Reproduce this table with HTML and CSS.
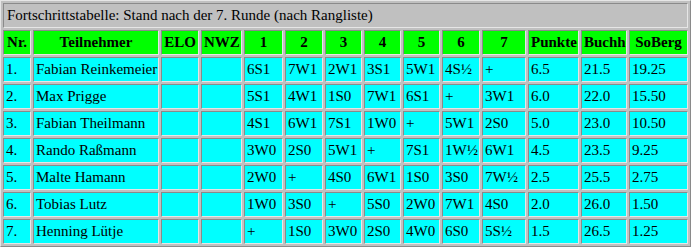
FILE: index.html
```
<!DOCTYPE html>
<html>
<head>
<meta charset="utf-8">
<link rel="stylesheet" href="styles.css">
</head>
<body>
<table class="tab">
<colgroup>
<col class="c-nr"><col class="c-name"><col class="c-elo"><col class="c-nwz">
<col class="c-r1"><col class="c-r2"><col class="c-r3"><col class="c-r4"><col class="c-r5"><col class="c-r6"><col class="c-r7">
<col class="c-pkt"><col class="c-buch"><col class="c-sob">
</colgroup>
<tr><td class="cap" colspan="14">Fortschrittstabelle: Stand nach der 7. Runde (nach Rangliste)</td></tr>
<tr class="head"><th>Nr.</th><th>Teilnehmer</th><th>ELO</th><th>NWZ</th><th>1</th><th>2</th><th>3</th><th>4</th><th>5</th><th>6</th><th>7</th><th>Punkte</th><th>Buchh</th><th>SoBerg</th></tr>
<tr><td>1.</td><td>Fabian Reinkemeier</td><td></td><td></td><td>6S1</td><td>7W1</td><td>2W1</td><td>3S1</td><td>5W1</td><td>4S½</td><td>+</td><td>6.5</td><td>21.5</td><td>19.25</td></tr>
<tr><td>2.</td><td>Max Prigge</td><td></td><td></td><td>5S1</td><td>4W1</td><td>1S0</td><td>7W1</td><td>6S1</td><td>+</td><td>3W1</td><td>6.0</td><td>22.0</td><td>15.50</td></tr>
<tr><td>3.</td><td>Fabian Theilmann</td><td></td><td></td><td>4S1</td><td>6W1</td><td>7S1</td><td>1W0</td><td>+</td><td>5W1</td><td>2S0</td><td>5.0</td><td>23.0</td><td>10.50</td></tr>
<tr><td>4.</td><td>Rando Raßmann</td><td></td><td></td><td>3W0</td><td>2S0</td><td>5W1</td><td>+</td><td>7S1</td><td>1W½</td><td>6W1</td><td>4.5</td><td>23.5</td><td>9.25</td></tr>
<tr><td>5.</td><td>Malte Hamann</td><td></td><td></td><td>2W0</td><td>+</td><td>4S0</td><td>6W1</td><td>1S0</td><td>3S0</td><td>7W½</td><td>2.5</td><td>25.5</td><td>2.75</td></tr>
<tr><td>6.</td><td>Tobias Lutz</td><td></td><td></td><td>1W0</td><td>3S0</td><td>+</td><td>5S0</td><td>2W0</td><td>7W1</td><td>4S0</td><td>2.0</td><td>26.0</td><td>1.50</td></tr>
<tr><td>7.</td><td>Henning Lütje</td><td></td><td></td><td>+</td><td>1S0</td><td>3W0</td><td>2S0</td><td>4W0</td><td>6S0</td><td>5S½</td><td>1.5</td><td>26.5</td><td>1.25</td></tr>
</table>
</body>
</html>
```
FILE: styles.css
```
html, body {
  margin: 0;
  padding: 0;
  background: #ffffff;
}
.tab {
  width: 691px;
  table-layout: fixed;
  border-collapse: separate;
  border-spacing: 2px;
  background: #c0c0c0;
  border: 1px solid;
  border-color: #e6e6e6 #8a8a8a #8a8a8a #e6e6e6;
  font-family: "Liberation Serif", "Times New Roman", serif;
  font-size: 15px;
  color: #000;
}
.c-nr { width: 28px; }
.c-name { width: 126px; }
.c-elo { width: 38px; }
.c-nwz { width: 41px; }
.c-r1 { width: 39px; }
.c-r2 { width: 38px; }
.c-r3 { width: 37px; }
.c-r4 { width: 37px; }
.c-r5 { width: 37px; }
.c-r6 { width: 38px; }
.c-r7 { width: 44px; }
.c-pkt { width: 51px; }
.c-buch { width: 46px; }
.c-sob { width: 59px; }
.tab td, .tab th {
  border: 1px solid;
  border-color: #8a8a8a #e6e6e6 #e6e6e6 #8a8a8a;
  padding: 3px 2px;
  line-height: 17px;
  text-align: left;
  background: #00ffff;
  white-space: nowrap;
  overflow: visible;
}
.tab td.cap {
  background: #c0c0c0;
  padding-left: 3px;
}
.tab .head th {
  background: #00ff00;
  font-weight: bold;
  text-align: center;
}
```
